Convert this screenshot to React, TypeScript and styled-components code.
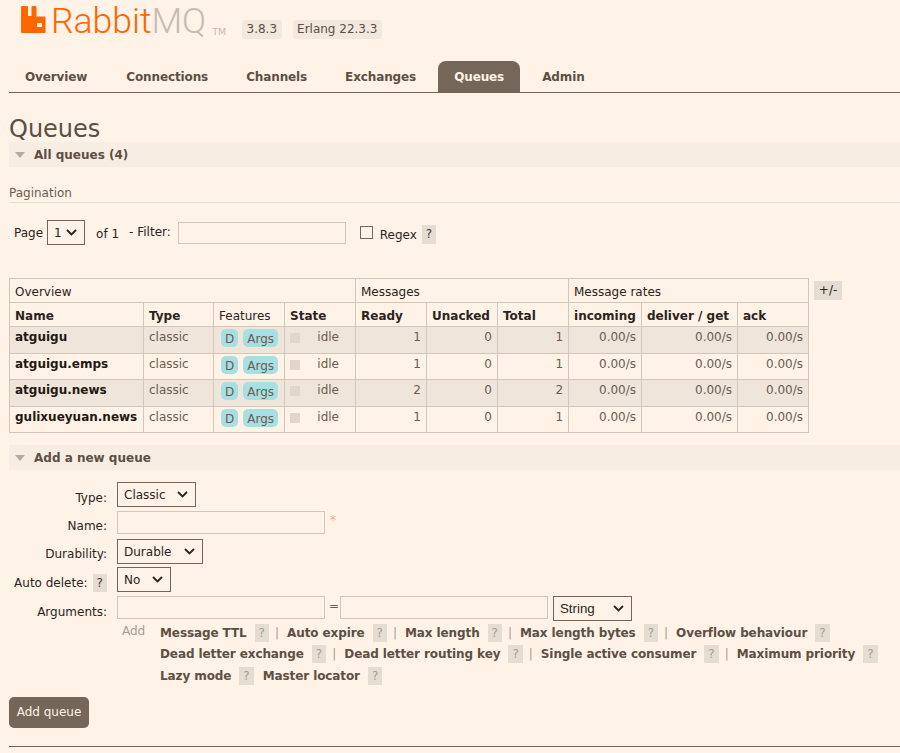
import React from 'react';
import styled, { createGlobalStyle } from 'styled-components';

const GlobalStyle = createGlobalStyle`
  html, body { margin: 0; padding: 0; background: #fff2e7; }
  body { font-family: "DejaVu Sans", Verdana, sans-serif; font-size: 12px; color: #2c231d; height: 753px; overflow: hidden; }
`;

const chevron = `url("data:image/svg+xml,%3Csvg xmlns='http://www.w3.org/2000/svg' width='11' height='7'%3E%3Cpath d='M1 1l4.500 4.500L10 1' fill='none' stroke='%232c231d' stroke-width='1.800'/%3E%3C/svg%3E")`;

const Header = styled.header`
  display: flex;
  align-items: flex-start;
  height: 61px;
  padding-left: 21px;
`;
const Logo = styled.div`
  display: flex;
  align-items: flex-start;
  width: 221px;
  padding-top: 6px;
`;
const LogoWord = styled.span`
  font-family: Roboto, sans-serif;
  font-weight: 300;
  font-size: 35.500px;
  line-height: 36px;
  letter-spacing: 0;
  margin: -3px 0 0 4px;
  color: #ff6600;
`;
const LogoMq = styled.span`
  color: #c7bcb0;
`;
const LogoTm = styled.span`
  font-size: 9.500px;
  color: #c7bcb0;
  margin: 20px 0 0 6px;
`;
const Version = styled.span`
  margin: 20px 11px 0 0;
  padding: 0 4.500px;
  height: 19px;
  line-height: 19px;
  border-radius: 3px;
  background: #f3e8de;
  color: #5d4f44;
`;

const Nav = styled.nav`
  display: flex;
  gap: 6px;
  margin-left: 9px;
  height: 31px;
  border-bottom: 1px solid #746658;
`;
const Tab = styled.a<{ $active?: boolean }>`
  padding: 0 16px;
  height: 31px;
  line-height: 33px;
  font-weight: 700;
  letter-spacing: -0.120px;
  border-radius: 8px 8px 0 0;
  color: ${p => (p.$active ? '#fff2e7' : '#5d4f44')};
  background: ${p => (p.$active ? '#746658' : 'transparent')};
  &:first-child {
    margin-right: 1px;
  }
`;

const Main = styled.main`
  padding-left: 9px;
`;
const Title = styled.h1`
  margin: 23px 0 0;
  font-size: 24px;
  font-weight: 400;
  line-height: 26px;
  color: #5d4f44;
`;
const SectionHead = styled.h2`
  display: flex;
  align-items: center;
  margin: 0;
  height: 25px;
  padding-left: 6px;
  background: #f8ede2;
  font-size: 12px;
  font-weight: 700;
  color: #5d4f44;
`;
const Caret = styled.i`
  width: 0;
  height: 0;
  margin-right: 9px;
  border-left: 5.500px solid transparent;
  border-right: 5.500px solid transparent;
  border-top: 6px solid #b5aa9f;
`;
const SubHead = styled.h3`
  margin: 19px 0 0;
  height: 16px;
  font-size: 12px;
  font-weight: 400;
  line-height: 15px;
  color: #6a5c50;
  border-bottom: 1px solid #e6dcd2;
`;
const PagerRow = styled.div`
  display: flex;
  align-items: center;
  height: 25px;
  margin: 17px 0 0 5px;
`;
const Select = styled.select<{ $w: number; $l?: number }>`
  appearance: none;
  width: ${p => p.$w}px;
  height: 25px;
  margin-left: ${p => p.$l ?? 0}px;
  padding: 0 0 0 6px;
  background: #fff2e7 ${chevron} no-repeat right 7px center;
  border: 1px solid #746658;
  border-radius: 0;
  color: #2c231d;
  font-family: "DejaVu Sans", sans-serif;
  font-size: 12px;
`;
const ArialSelect = styled(Select)`
  font-family: "Liberation Sans", sans-serif;
  font-size: 13.300px;
`;
const TextInput = styled.input<{ $w: number; $h?: number; $l?: number }>`
  box-sizing: border-box;
  width: ${p => p.$w}px;
  height: ${p => p.$h ?? 23}px;
  margin-left: ${p => p.$l ?? 0}px;
  background: #fff2e7;
  border: 1px solid #d3c7bc;
  padding: 0;
`;
const PagerText = styled.span<{ $l?: number; $t?: number }>`
  margin-left: ${p => p.$l ?? 0}px;
  margin-top: ${p => p.$t ?? 0}px;
`;
const Box = styled.input`
  appearance: none;
  width: 13px;
  height: 13px;
  margin: 0 0 0 14px;
  background: #fff2e7;
  border: 1px solid #746658;
`;
const Help = styled.span<{ $faint?: boolean }>`
  display: inline-block;
  flex: none;
  width: 14.400px;
  height: 18px;
  line-height: 18px;
  text-align: center;
  font-weight: 400;
  background: #e5dcd2;
  color: ${p => (p.$faint ? '#a89c90' : '#4a3a30')};
`;
const RegexHelp = styled(Help)`
  height: 19px;
  margin: 4px 0 0 5px;
  line-height: 19px;
`;

const TableRow = styled.div`
  display: flex;
  align-items: flex-start;
  margin-top: 33px;
`;
const Table = styled.table`
  width: 799px;
  table-layout: fixed;
  border-collapse: collapse;
`;
const Th = styled.th<{ $bold?: boolean }>`
  box-sizing: border-box;
  height: 24px;
  padding: 3px 5px 0;
  text-align: left;
  border: 1px solid #d3c7bc;
  font-weight: ${p => (p.$bold ? 700 : 400)};
  color: #2c231d;
`;
const BodyRow = styled.tr<{ $alt: boolean }>`
  background: ${p => (p.$alt ? '#f0e5db' : 'transparent')};
`;
const Td = styled.td<{ $num?: boolean }>`
  box-sizing: border-box;
  height: 26.500px;
  padding: 3px 5px 0;
  vertical-align: top;
  text-align: ${p => (p.$num ? 'right' : 'left')};
  border: 1px solid #d3c7bc;
  color: #6a5c50;
  line-height: 15px;
`;
const NameCell = styled(Td)`
  font-weight: 700;
  color: #1f1812;
`;
const PillCell = styled(Td)`
  padding: 2px 0 0 7px;
  white-space: nowrap;
  line-height: 18px;
`;
const Pill = styled.span`
  display: inline-block;
  vertical-align: top;
  padding: 0 4px;
  margin-right: 5px;
  height: 18px;
  line-height: 20px;
  border-radius: 5px;
  background: #a8dfe3;
  color: #6a5c50;
`;
const StateInner = styled.div`
  display: flex;
  justify-content: space-between;
  padding-right: 11px;
`;
const StateDot = styled.i`
  width: 10px;
  height: 10px;
  margin-top: 3px;
  background: #e0d6cc;
`;
const Toggle = styled.span`
  width: 28px;
  height: 19px;
  margin: 3px 0 0 5px;
  line-height: 19px;
  text-align: center;
  background: #e5dcd2;
  color: #2c231d;
`;

const SectionGap = styled.div`
  margin-top: 12px;
`;
const Form = styled.form`
  display: grid;
  grid-template-columns: 98px 1fr;
  column-gap: 10px;
  margin-top: 12px;
`;
const Label = styled.label<{ $h: number; $pad?: number }>`
  display: flex;
  align-items: center;
  justify-content: flex-end;
  gap: 5px;
  height: ${p => p.$h}px;
  padding-top: ${p => p.$pad ?? 3}px;
  box-sizing: border-box;
`;
const Control = styled.div<{ $h: number }>`
  display: flex;
  align-items: flex-start;
  gap: 4px;
  height: ${p => p.$h}px;
`;
const Star = styled.span`
  margin: 2px 0 0 1px;
  color: #f4a98a;
`;
const Equals = styled.span`
  width: 7px;
  text-align: center;
  line-height: 20px;
  color: #6a5c50;
`;
const ArgsBlock = styled.div`
  grid-column: 2;
  display: flex;
  margin-top: 1px;
`;
const AddLink = styled.span`
  width: 43px;
  padding: 2px 0 0 5px;
  flex: none;
  box-sizing: border-box;
  color: #a89c90;
`;
const ArgRows = styled.div`
  display: flex;
  flex-direction: column;
`;
const ArgRow = styled.div`
  display: flex;
  align-items: center;
  height: 21.500px;
`;
const ArgName = styled.span`
  font-weight: 700;
  letter-spacing: -0.100px;
  color: #5d4f44;
  margin-right: 8px;
  white-space: nowrap;
`;
const Pipe = styled.span`
  margin: 0 8px 0 6px;
  color: #a89c90;
`;
const Spacer = styled.span`
  width: 9px;
`;
const Submit = styled.button`
  display: block;
  margin-top: 10px;
  width: 80px;
  height: 31px;
  padding: 0;
  border: 0;
  border-radius: 5px;
  background: #746658;
  color: #fff2e7;
  font-family: "DejaVu Sans", sans-serif;
  font-size: 12px;
`;
const Rule = styled.hr`
  margin: 18px 0 0;
  border: 0;
  border-top: 1px solid #746658;
`;

const RabbitIcon = () => (
  <svg width="26" height="27" viewBox="0 0 26 27">
    <path
      fill="#ff6600"
      fillRule="evenodd"
      d="M1 0h5a1 1 0 0 1 1 1v8.500a.5.500 0 0 0 .5.500h2.500a.5.500 0 0 0 .5-.500V1a1 1 0 0 1 1-1h3a1 1 0 0 1 1 1v9.500h8a1 1 0 0 1 1 1V26a1 1 0 0 1-1 1H1a1 1 0 0 1-1-1V1a1 1 0 0 1 1-1zM16 17v4h5v-4z"
    />
  </svg>
);

const queues = [
  { name: 'atguigu', ready: 1, total: 1 },
  { name: 'atguigu.emps', ready: 1, total: 1 },
  { name: 'atguigu.news', ready: 2, total: 2 },
  { name: 'gulixueyuan.news', ready: 1, total: 1 },
];
const widths = [134, 70, 71, 71, 71, 71, 71, 73, 96, 71];
const headers = ['Name', 'Type', 'Features', 'State', 'Ready', 'Unacked', 'Total', 'incoming', 'deliver / get', 'ack'];
const tabs = ['Overview', 'Connections', 'Channels', 'Exchanges', 'Queues', 'Admin'];
const argRows = [
  ['Message TTL', 'Auto expire', 'Max length', 'Max length bytes', 'Overflow behaviour'],
  ['Dead letter exchange', 'Dead letter routing key', 'Single active consumer', 'Maximum priority'],
];

export default function App() {
  return (
    <>
      <GlobalStyle />
      <Header>
        <Logo>
          <RabbitIcon />
          <LogoWord>
            Rabbit<LogoMq>MQ</LogoMq>
          </LogoWord>
          <LogoTm>TM</LogoTm>
        </Logo>
        <Version>3.8.3</Version>
        <Version>Erlang 22.3.3</Version>
      </Header>
      <Nav>
        {tabs.map(t => (
          <Tab key={t} $active={t === 'Queues'}>
            {t}
          </Tab>
        ))}
      </Nav>
      <Main>
        <Title>Queues</Title>
        <SectionHead>
          <Caret />
          All queues (4)
        </SectionHead>
        <SubHead>Pagination</SubHead>
        <PagerRow>
          <span>Page</span>
          <Select $w={38} $l={4}>
            <option>1</option>
          </Select>
          <PagerText $l={11} $t={2}>
            of 1
          </PagerText>
          <PagerText $l={10} $t={-2}>
            - Filter:
          </PagerText>
          <TextInput $w={168} $h={22} $l={7} />
          <Box type="checkbox" />
          <PagerText $l={7} $t={4}>
            Regex
          </PagerText>
          <RegexHelp>?</RegexHelp>
        </PagerRow>
        <TableRow>
          <Table>
            <colgroup>
              {widths.map((w, i) => (
                <col key={i} width={w} />
              ))}
            </colgroup>
            <thead>
              <tr>
                <Th colSpan={4}>Overview</Th>
                <Th colSpan={3}>Messages</Th>
                <Th colSpan={3}>Message rates</Th>
              </tr>
              <tr>
                {headers.map(h => (
                  <Th key={h} $bold={h !== 'Features'}>
                    {h}
                  </Th>
                ))}
              </tr>
            </thead>
            <tbody>
              {queues.map((q, i) => (
                <BodyRow key={q.name} $alt={i % 2 === 0}>
                  <NameCell>{q.name}</NameCell>
                  <Td>classic</Td>
                  <PillCell>
                    <Pill>D</Pill>
                    <Pill>Args</Pill>
                  </PillCell>
                  <Td>
                    <StateInner>
                      <StateDot />
                      idle
                    </StateInner>
                  </Td>
                  <Td $num>{q.ready}</Td>
                  <Td $num>0</Td>
                  <Td $num>{q.total}</Td>
                  <Td $num>0.00/s</Td>
                  <Td $num>0.00/s</Td>
                  <Td $num>0.00/s</Td>
                </BodyRow>
              ))}
            </tbody>
          </Table>
          <Toggle>+/-</Toggle>
        </TableRow>
        <SectionGap>
          <SectionHead>
            <Caret />
            Add a new queue
          </SectionHead>
        </SectionGap>
        <Form>
          <Label $h={29}>Type:</Label>
          <Control $h={29}>
            <Select $w={79}>
              <option>Classic</option>
            </Select>
          </Control>
          <Label $h={28} $pad={1}>
            Name:
          </Label>
          <Control $h={28}>
            <TextInput $w={208} />
            <Star>*</Star>
          </Control>
          <Label $h={28} $pad={1}>
            Durability:
          </Label>
          <Control $h={28}>
            <Select $w={86}>
              <option>Durable</option>
            </Select>
          </Control>
          <Label $h={29}>
            Auto delete: <Help>?</Help>
          </Label>
          <Control $h={29}>
            <Select $w={54}>
              <option>No</option>
            </Select>
          </Control>
          <Label $h={25} $pad={7}>
            Arguments:
          </Label>
          <Control $h={25}>
            <TextInput $w={208} />
            <Equals>=</Equals>
            <TextInput $w={208} />
            <ArialSelect $w={79} $l={1}>
              <option>String</option>
            </ArialSelect>
          </Control>
          <ArgsBlock>
            <AddLink>Add</AddLink>
            <ArgRows>
              {argRows.map((row, r) => (
                <ArgRow key={r}>
                  {row.map((a, i) => (
                    <React.Fragment key={a}>
                      <ArgName>{a}</ArgName>
                      <Help $faint>?</Help>
                      {i < row.length - 1 && <Pipe>|</Pipe>}
                    </React.Fragment>
                  ))}
                </ArgRow>
              ))}
              <ArgRow>
                <ArgName>Lazy mode</ArgName>
                <Help $faint>?</Help>
                <Spacer />
                <ArgName>Master locator</ArgName>
                <Help $faint>?</Help>
              </ArgRow>
            </ArgRows>
          </ArgsBlock>
        </Form>
        <Submit type="button">Add queue</Submit>
        <Rule />
      </Main>
    </>
  );
}
